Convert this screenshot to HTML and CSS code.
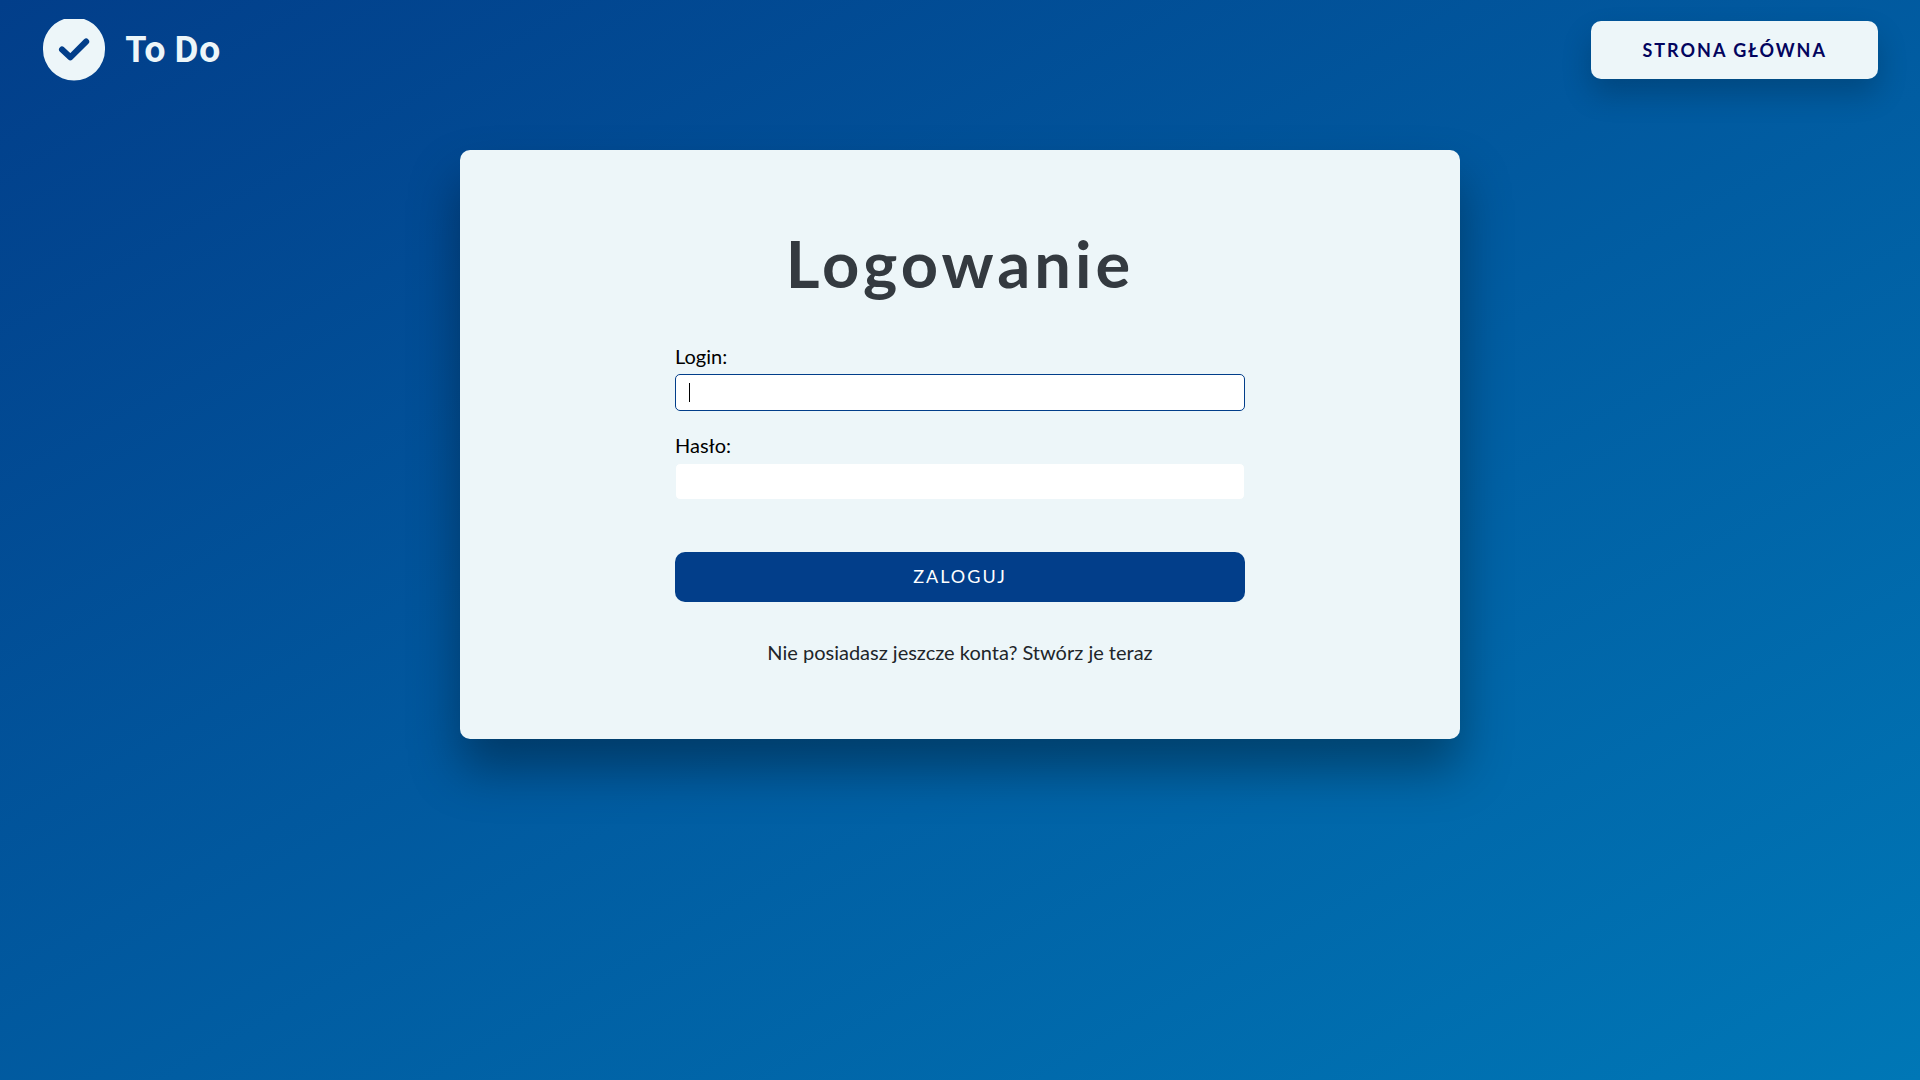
FILE: index.html
```html
<!DOCTYPE html>
<html lang="pl">
<head>
  <meta charset="utf-8">
  <meta name="viewport" content="width=device-width, initial-scale=1">
  <title>To Do - Logowanie</title>
  <link rel="stylesheet" href="styles.css">
</head>
<body>
  <header class="header">
    <a class="logo" href="#">
      <svg class="logo__icon" viewBox="0 0 62 62" aria-hidden="true">
        <path fill="#edf6f9" d="M21 0H41A31 31 0 0 1 62 30.500A31 31 0 0 1 0 30.500A31 31 0 0 1 21 0Z"/>
        <path fill="none" stroke="#023e8a" stroke-width="6" stroke-linecap="round" stroke-linejoin="round" d="M19 30.500L27.300 38.300L43.200 22.500"/>
      </svg>
      <span class="logo__name">To Do</span>
    </a>
    <a class="home-link" href="#">Strona główna</a>
  </header>
  <main class="card">
    <h1 class="card__title">Logowanie</h1>
    <form class="form">
      <div class="field">
        <label class="field__label" for="login">Login:</label>
        <input class="field__input" id="login" type="text" autofocus>
      </div>
      <div class="field">
        <label class="field__label" for="password">Hasło:</label>
        <input class="field__input" id="password" type="password">
      </div>
      <button class="form__submit" type="submit">Zaloguj</button>
    </form>
    <a class="card__link" href="#">Nie posiadasz jeszcze konta? Stwórz je teraz</a>
  </main>
</body>
</html>
```
FILE: styles.css
```css
* {
  box-sizing: border-box;
}

body {
  margin: 0;
  min-height: 100vh;
  font-family: Lato, "Liberation Sans", sans-serif;
  font-size: 20px;
  line-height: 24px;
  color: #000;
  background: linear-gradient(to bottom right, #023e8a, #0077b6);
}

a {
  color: inherit;
  text-decoration: none;
}

.header {
  display: flex;
  align-items: center;
  justify-content: space-between;
  height: 100px;
  padding: 0 42px 0 43px;
}

.logo {
  display: flex;
  align-items: center;
  gap: 20px;
  color: #edf6f9;
}

.logo__icon {
  width: 62px;
  height: 62px;
}

.logo__name {
  padding-bottom: 6px;
  font-family: "Noto Sans CJK SC", Lato, sans-serif;
  font-size: 35px;
  font-weight: 700;
  line-height: 44px;
}

.home-link {
  padding: 17px 51px;
  border-radius: 10px;
  background: #edf6f9;
  box-shadow: 0 15px 30px rgba(0, 0, 0, 0.2);
  color: #03045e;
  font-size: 18px;
  font-weight: 700;
  letter-spacing: 2px;
  text-transform: uppercase;
}

.card {
  display: flex;
  flex-direction: column;
  align-items: center;
  width: 90%;
  max-width: 1000px;
  margin: 50px auto;
  padding: 74px 30px 75px;
  border-radius: 10px;
  background: #edf6f9;
  box-shadow: 0 30px 50px rgba(0, 0, 0, 0.35);
}

.card__title {
  margin: 0 0 42px;
  color: #343a40;
  font-size: 65px;
  font-weight: 700;
  line-height: 78px;
  letter-spacing: 4px;
}

.form {
  display: flex;
  flex-direction: column;
  gap: 22px;
  width: 100%;
  max-width: 570px;
}

.field {
  display: flex;
  flex-direction: column;
  gap: 6px;
}

.field__input {
  width: 100%;
  height: 37px;
  padding: 5px 13px;
  border: 1px solid #edf6f9;
  border-radius: 5px;
  outline: none;
  background: #fff;
  font: inherit;
}

/* Thin steady caret in the focused box */
.field__input:focus {
  border-color: #023e8a;
  background: linear-gradient(#000, #000) 13px center / 1px 19px no-repeat #fff;
  caret-color: transparent;
}

.form__submit {
  height: 50px;
  margin-top: 30px;
  padding: 0 0 2px;
  border: 0;
  border-radius: 10px;
  background: #023e8a;
  color: #fff;
  font: inherit;
  font-size: 18px;
  letter-spacing: 2px;
  text-transform: uppercase;
}

.card__link {
  margin-top: 38px;
  color: #212529;
}
```
